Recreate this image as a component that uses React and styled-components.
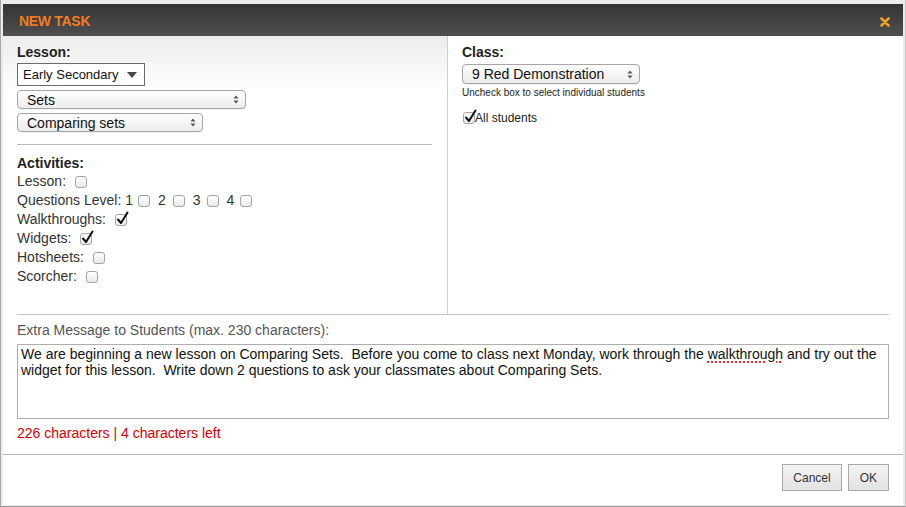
import React from "react";
import styled, { createGlobalStyle } from "styled-components";

const Global = createGlobalStyle`
  html, body { margin: 0; padding: 0; background: #fff; }
  body { font-family: "Liberation Sans", Arial, Helvetica, sans-serif; }
  * { box-sizing: border-box; }
`;

const Dialog = styled.div`
  width: 906px;
  height: 507px;
  background: #ebebeb;
  border-left: 1px solid #a9a9a9;
  border-right: 1px solid #c8c8c8;
  border-bottom: 1px solid #9a9a9a;
  padding: 4px 2px 1px 2px;
  display: flex;
  flex-direction: column;
`;

const TitleBar = styled.div`
  height: 32px;
  flex: none;
  background: linear-gradient(#343434, #4f4f4f);
  display: flex;
  align-items: center;
  justify-content: space-between;
  padding: 0 13px 0 16px;
`;

const Title = styled.div`
  color: #f47c20;
  font-weight: bold;
  font-size: 14px;
  letter-spacing: -0.3px;
  padding-top: 1px;
`;

const Close = styled.svg`
  width: 10px;
  height: 10px;
  margin-top: 4px;
`;

const Body = styled.div`
  flex: 1;
  background: #fff;
  display: flex;
  flex-direction: column;
`;

const Columns = styled.div`
  display: flex;
  margin: 0 14px;
  height: 279px;
  border-bottom: 1px solid #c4c4c4;
`;

const LeftCol = styled.div`
  width: 445px;
  flex: none;
  margin-left: -14px;
  padding: 8px 15px 0 14px;
  border-right: 1px solid #cfcfcf;
  background: linear-gradient(#ececec 0px, #ffffff 55px);
`;

const RightCol = styled.div`
  flex: 1;
  padding: 8px 0 0 14px;
`;

const Heading = styled.div`
  font-weight: bold;
  font-size: 14px;
  line-height: 17px;
  color: #222;
`;

const PlainSelect = styled.div`
  margin-top: 2px;
  width: 128px;
  height: 23px;
  border: 1px solid #6b6b6b;
  background: #fff;
  display: flex;
  align-items: center;
  justify-content: space-between;
  padding: 0 7px 0 5px;
  font-size: 13px;
  color: #111;
`;

const Caret = styled.span`
  width: 0;
  height: 0;
  border-left: 5px solid transparent;
  border-right: 5px solid transparent;
  border-top: 6px solid #444;
`;

const MacSelect = styled.div`
  margin-top: ${(p) => p.$mt}px;
  width: ${(p) => p.$w}px;
  height: ${(p) => p.$h || 19}px;
  border: 1px solid #a6a6a6;
  border-radius: 4px;
  background: linear-gradient(#ffffff, #ececec);
  box-shadow: 0 1px 0 rgba(0,0,0,0.05);
  display: flex;
  align-items: center;
  justify-content: space-between;
  padding: 0 6px 0 9px;
  font-size: 14px;
  color: #111;
`;

const Arrows = styled.svg`
  width: 6px;
  height: 9px;
`;

const Rule = styled.div`
  height: 1px;
  background: #b8b8b8;
  margin: 12px 0 10px 0;
`;

const Row = styled.div`
  display: flex;
  align-items: center;
  font-size: 14px;
  line-height: 19px;
  height: 19px;
  color: #333;
`;

const Label = styled.span`
  margin-right: ${(p) => p.$gap ?? 9}px;
`;

const BoxWrap = styled.span`
  position: relative;
  width: 12px;
  height: 12px;
  flex: none;
  margin-right: ${(p) => p.$mr || 0}px;
`;

const Box = styled.span`
  display: block;
  width: 12px;
  height: 12px;
  border: 1px solid #a4a4a4;
  border-radius: 3px;
  background: linear-gradient(#ffffff, #e9e9e9);
`;

const Tick = styled.svg`
  position: absolute;
  left: 1px;
  top: -3px;
  width: 13px;
  height: 14px;
`;

function Check({ checked, mr }) {
  return (
    <BoxWrap $mr={mr}>
      <Box />
      {checked && (
        <Tick viewBox="0 0 13 14">
          <path d="M2 8.5 L5 12 L11.5 1.5" fill="none" stroke="#111" strokeWidth="2" strokeLinecap="round" strokeLinejoin="round" />
        </Tick>
      )}
    </BoxWrap>
  );
}

const Note = styled.div`
  font-size: 10px;
  color: #222;
  margin-top: 3px;
  line-height: 12px;
`;

const AllRow = styled.div`
  display: flex;
  align-items: center;
  margin-top: 12px;
  margin-left: 1px;
  font-size: 12px;
  color: #222;
`;

const Message = styled.div`
  padding: 7px 14px 0 14px;
`;

const MsgLabel = styled.div`
  font-size: 14px;
  line-height: 16px;
  color: #555;
`;

const TextBox = styled.div`
  margin-top: 6px;
  height: 75px;
  border: 1px solid #adadad;
  padding: 1px 3px;
  font-size: 14px;
  line-height: 16px;
  color: #111;
  white-space: pre-wrap;
`;

const Spell = styled.span`
  text-decoration: underline dotted #e03030;
  text-decoration-thickness: 2px;
  text-underline-offset: 2px;
`;

const Counter = styled.div`
  font-size: 14px;
  line-height: 16px;
  color: #d40000;
  margin-top: 6px;
`;

const Footer = styled.div`
  margin-top: 13px;
  border-top: 1px solid #b4b4b4;
  display: flex;
  justify-content: flex-end;
  gap: 6px;
  padding: 9px 14px 0 0;
`;

const Button = styled.div`
  height: 27px;
  padding: 0 ${(p) => p.$px}px;
  border: 1px solid #a9a9a9;
  background: linear-gradient(#f4f4f4, #e2e2e2);
  font-size: 12px;
  color: #333;
  display: flex;
  align-items: center;
`;

const arrowsPath = "M0.5 3.5 L3 0.5 L5.5 3.5 Z M0.5 5.5 L3 8.5 L5.5 5.5 Z";

export default function App() {
  return (
    <>
      <Global />
      <Dialog>
        <TitleBar>
          <Title>NEW TASK</Title>
          <Close viewBox="0 0 10 10">
            <path d="M1.5 1.5 L8.5 8.5 M8.5 1.5 L1.5 8.5" stroke="#f0a020" strokeWidth="2.6" strokeLinecap="round" />
          </Close>
        </TitleBar>
        <Body>
          <Columns>
            <LeftCol>
              <Heading>Lesson:</Heading>
              <PlainSelect>
                <span>Early Secondary</span>
                <Caret />
              </PlainSelect>
              <MacSelect $mt={4} $w={229}>
                <span>Sets</span>
                <Arrows viewBox="0 0 6 9">
                  <path d={arrowsPath} fill="#555" />
                </Arrows>
              </MacSelect>
              <MacSelect $mt={4} $w={186}>
                <span>Comparing sets</span>
                <Arrows viewBox="0 0 6 9">
                  <path d={arrowsPath} fill="#555" />
                </Arrows>
              </MacSelect>
              <Rule />
              <Heading>Activities:</Heading>
              <Row>
                <Label>Lesson:</Label>
                <Check />
              </Row>
              <Row>
                <Label $gap={5}>Questions Level: 1</Label>
                <Check mr={8} />
                <Label $gap={7}>2</Label>
                <Check mr={8} />
                <Label $gap={6}>3</Label>
                <Check mr={8} />
                <Label $gap={6}>4</Label>
                <Check />
              </Row>
              <Row>
                <Label>Walkthroughs:</Label>
                <Check checked />
              </Row>
              <Row>
                <Label>Widgets:</Label>
                <Check checked />
              </Row>
              <Row>
                <Label>Hotsheets:</Label>
                <Check />
              </Row>
              <Row>
                <Label>Scorcher:</Label>
                <Check />
              </Row>
            </LeftCol>
            <RightCol>
              <Heading>Class:</Heading>
              <MacSelect $mt={3} $w={178} $h={20}>
                <span>9 Red Demonstration</span>
                <Arrows viewBox="0 0 6 9">
                  <path d={arrowsPath} fill="#555" />
                </Arrows>
              </MacSelect>
              <Note>Uncheck box to select individual students</Note>
              <AllRow>
                <Check checked />
                <span>All students</span>
              </AllRow>
            </RightCol>
          </Columns>
          <Message>
            <MsgLabel>Extra Message to Students (max. 230 characters):</MsgLabel>
            <TextBox>
              {"We are beginning a new lesson on Comparing Sets.  Before you come to class next Monday, work through the "}
              <Spell>walkthrough</Spell>
              {" and try out the\nwidget for this lesson.  Write down 2 questions to ask your classmates about Comparing Sets."}
            </TextBox>
            <Counter>226 characters | 4 characters left</Counter>
          </Message>
          <Footer>
            <Button $px={10}>Cancel</Button>
            <Button $px={11}>OK</Button>
          </Footer>
        </Body>
      </Dialog>
    </>
  );
}
